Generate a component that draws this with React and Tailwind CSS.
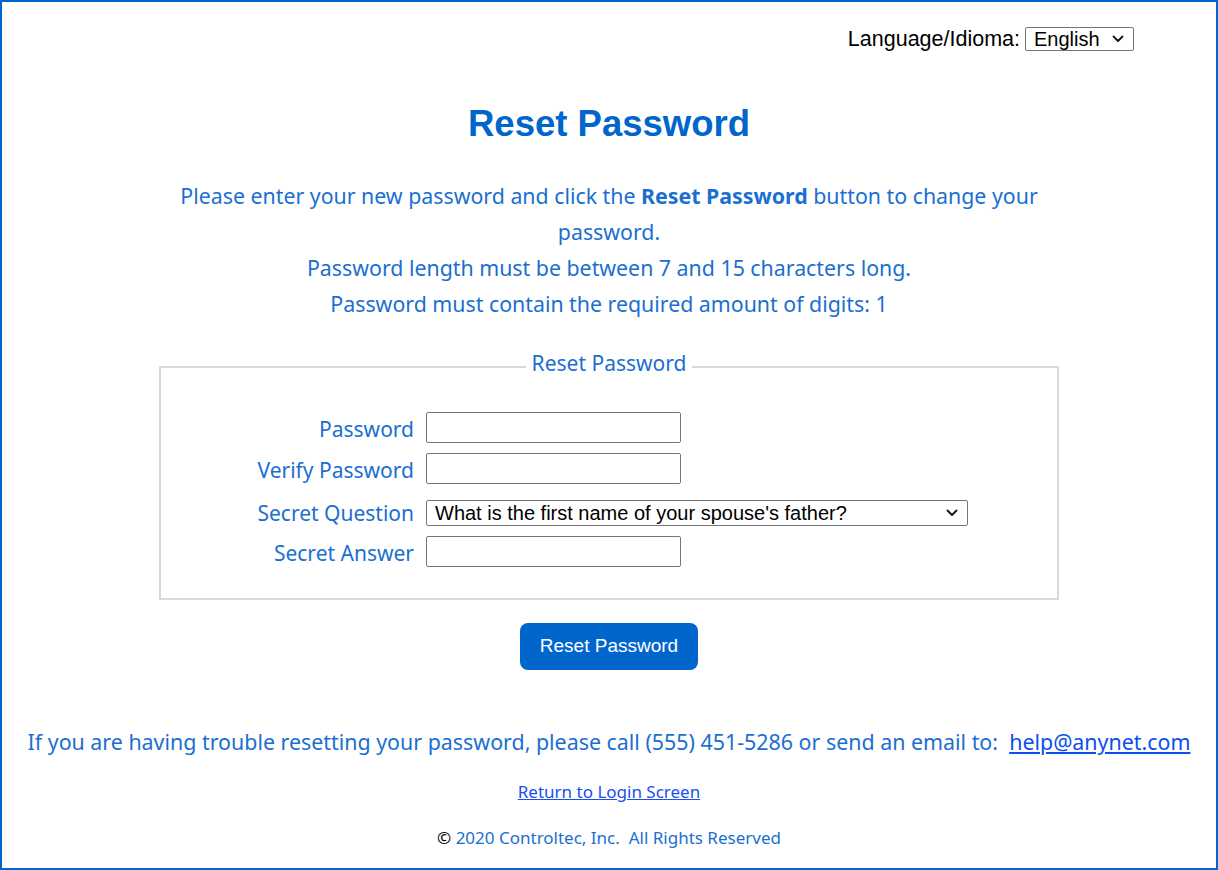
import { useState } from 'react'

const questions = [
  "What is the first name of your spouse's father?",
  'What is the name of your first pet?',
  'What city were you born in?',
]

// Chevron façon Chrome pour les listes déroulantes
function Chevron({ className }) {
  return (
    <svg
      viewBox="0 0 12 8"
      className={`pointer-events-none absolute top-1/2 h-[8px] w-[12px] -translate-y-1/2 ${className}`}
      fill="none"
      stroke="#111"
      strokeWidth="1.8"
      strokeLinecap="round"
      strokeLinejoin="round"
    >
      <polyline points="1.5,1.5 6,6 10.5,1.5" />
    </svg>
  )
}

function Field({ label, leading = 'leading-[27px] pt-[4px]', children }) {
  return (
    <div className="flex items-center">
      <label className={`w-[265px] pr-[12px] text-right text-[21px] text-[#1a6fd1] ${leading}`}>{label}</label>
      {children}
    </div>
  )
}

export default function App() {
  const [lang, setLang] = useState('English')
  const [question, setQuestion] = useState(questions[0])

  return (
    <div className="relative h-[870px] w-[1218px] overflow-hidden border-2 border-[#0066cc] bg-white font-['Noto_Sans',sans-serif] text-[#1a6fd1]">
      {/* fine bord du haut à gauche */}
      <div className="absolute left-[-2px] top-[-2px] h-px w-[222px] bg-white" />

      {/* Sélecteur de langue */}
      <div className="mt-[24px] flex h-[26px] items-center justify-end pr-[82px] font-['Liberation_Sans',Arial,sans-serif] text-[21.5px] leading-[26px] text-black">
        <span>Language/Idioma:</span>
        <div className="relative ml-[5px]">
          <select
            value={lang}
            onChange={(e) => setLang(e.target.value)}
            className="block h-[24px] w-[109px] appearance-none rounded-[2px] border border-[#767676] bg-white pl-[8px] text-[20px] leading-[22px] text-black"
          >
            <option>English</option>
            <option>Español</option>
          </select>
          <Chevron className="right-[10px]" />
        </div>
      </div>

      <h1 className="mt-[45px] text-center font-['Liberation_Sans',Arial,sans-serif] text-[36.5px] font-bold leading-[54px] text-[#0066cc]">
        Reset Password
      </h1>

      <div className="mx-auto mt-[27px] w-[900px] text-center text-[21.33px] leading-[36px]">
        <p>
          Please enter your new password and click the <b>Reset Password</b> button to change your password.
        </p>
        <p>Password length must be between 7 and 15 characters long.</p>
        <p>Password must contain the required amount of digits: 1</p>
      </div>

      <fieldset className="mx-auto mt-[34px] w-[900px] border-2 border-[#d9d9d9] pb-[31px] pt-[35px]">
        <legend className="mx-auto px-[6px] text-[21px] leading-[21px]">
          <span className="relative top-[-3px]">Reset Password</span>
        </legend>
        <div className="flex flex-col gap-[10px]">
          <Field label="Password">
            <input type="password" className="h-[31px] w-[255px] rounded-[2px] border border-[#767676]" />
          </Field>
          <Field label="Verify Password">
            <input type="password" className="h-[31px] w-[255px] rounded-[2px] border border-[#767676]" />
          </Field>
          <div className="pt-[6px]">
            <Field label="Secret Question" leading="leading-[26px]">
              <div className="relative">
                <select
                  value={question}
                  onChange={(e) => setQuestion(e.target.value)}
                  className="block h-[26px] w-[542px] appearance-none rounded-[2px] border border-[#767676] bg-white pl-[8px] font-['Liberation_Sans',Arial,sans-serif] text-[20px] leading-[24px] text-black"
                >
                  {questions.map((q) => (
                    <option key={q}>{q}</option>
                  ))}
                </select>
                <Chevron className="right-[10px]" />
              </div>
            </Field>
          </div>
          <Field label="Secret Answer">
            <input type="text" className="h-[31px] w-[255px] rounded-[2px] border border-[#767676]" />
          </Field>
        </div>
      </fieldset>

      <div className="mt-[23px] flex justify-center">
        <button className="h-[47px] w-[178px] rounded-[8px] bg-[#0066cc] font-['Liberation_Sans',Arial,sans-serif] text-[19px] text-white">
          Reset Password
        </button>
      </div>

      <p className="mt-[56px] whitespace-pre text-center text-[21.4px] leading-[32px]">
        {'If you are having trouble resetting your password, please call (555) 451-5286 or send an email to:  '}
        <a href="#" className="text-[#0b4ff0] underline">
          help@anynet.com
        </a>
      </p>

      <p className="mt-[21px] text-center text-[17px] leading-[25px]">
        <a href="#" className="text-[#1a4ff0] underline">
          Return to Login Screen
        </a>
      </p>

      <p className="mt-[21px] whitespace-pre text-center text-[17px] leading-[25px]">
        <span className="text-black">©</span>
        {' 2020 Controltec, Inc.  All Rights Reserved'}
      </p>
    </div>
  )
}
